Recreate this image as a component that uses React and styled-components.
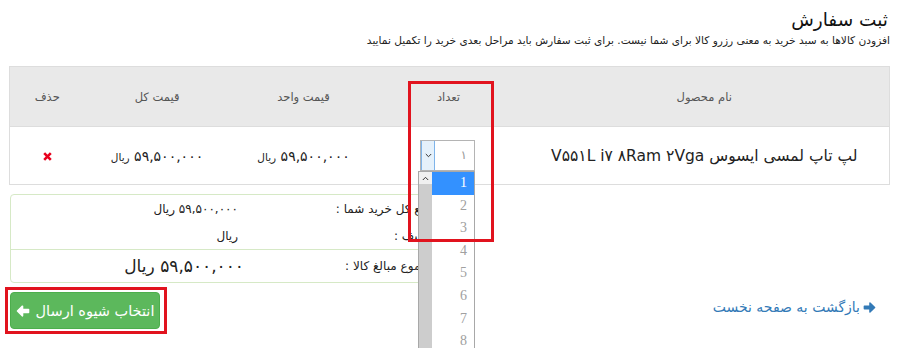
import React from 'react';
import styled, { createGlobalStyle } from 'styled-components';

const GlobalStyle = createGlobalStyle`
   html, body {
      margin: 0;
      padding: 0;
      background: #fff;
   }
   body {
      font-family: "DejaVu Sans", "Noto Sans", sans-serif;
      direction: rtl;
      color: #333;
   }
`;

const PageStyle = styled.div`
   box-sizing: border-box;
   height: 348px;
   overflow: hidden;
   padding: 8px 10px 0 10px;
`;

const TitleStyle = styled.h2`
   margin: 0;
   font-size: 18.5px;
   font-weight: 400;
   line-height: 24px;
   color: #111;
   padding-right: 2px;
`;

const SubtitleStyle = styled.p`
   margin: 0;
   font-size: 10.6px;
   line-height: 16px;
   color: #222;
`;

const TableStyle = styled.table`
   margin-top: 18px;
   width: 880px;
   border-collapse: collapse;
   table-layout: fixed;
   border: 1px solid #ddd;

   & th {
      background: #e9e9e9;
      height: 59px;
      font-size: 11.5px;
      font-weight: 400;
      color: #555;
      border-bottom: 1px solid #ddd;
      text-align: center;
      vertical-align: middle;
      padding: 0;
   }

   & td {
      height: 57px;
      text-align: center;
      vertical-align: middle;
      padding: 0;
   }
`;

const ProductName = styled.span`
   font-size: 15.5px;
   color: #222;
`;

const Price = styled.span`
   font-size: 14px;
   color: #222;

   & small {
      font-size: 10.5px;
   }
`;

const SelectWrap = styled.div`
   position: relative;
   display: inline-block;
   vertical-align: middle;
   width: 55px;
   height: 31px;
   margin-right: 2px;
`;

const SelectBox = styled.div`
   box-sizing: border-box;
   width: 100%;
   height: 100%;
   border: 1px solid #b4b4b4;
   display: flex;
   direction: ltr;
   background: #fff;
`;

const SelectArrow = styled.div`
   width: 12px;
   background: #e5f1fb;
   border-right: 1px solid #7eb4ea;
   border-left: 1px solid #7eb4ea;
   display: flex;
   align-items: center;
   justify-content: center;
`;

const SelectValue = styled.div`
   flex: 1;
   text-align: right;
   padding-right: 7px;
   font-size: 12px;
   line-height: 29px;
   color: #999;
`;

const ListStyle = styled.div`
   position: absolute;
   top: 31px;
   left: -2px;
   width: 57px;
   height: 200px;
   box-sizing: border-box;
   border: 1px solid #a8a8a8;
   border-bottom: none;
   background: #fff;
   display: flex;
   direction: ltr;
   z-index: 10;
`;

const ScrollTrack = styled.div`
   width: 13px;
   background: #cdcdcd;
   display: flex;
   flex-direction: column;
`;

const ScrollUp = styled.div`
   height: 12px;
   background: #f0f0f0;
   display: flex;
   align-items: center;
   justify-content: center;
`;

const ListItems = styled.div`
   flex: 1;
   display: flex;
   flex-direction: column;
`;

const ListItem = styled.div`
   height: 22.6px;
   flex-shrink: 0;
   line-height: 22.6px;
   text-align: right;
   padding-right: 7px;
   font-family: "Liberation Serif", serif;
   font-size: 14px;
   color: ${({ $active }) => ($active ? '#fff' : '#a0a0a0')};
   background: ${({ $active }) => ($active ? '#3391ff' : 'transparent')};
`;

const Highlight = styled.div`
   position: absolute;
   box-sizing: border-box;
   border: 3px solid #e1131e;
   pointer-events: none;
   z-index: 11;
   left: ${({ $left }) => $left}px;
   top: ${({ $top }) => $top}px;
   width: ${({ $width }) => $width}px;
   height: ${({ $height }) => $height}px;
`;

const SummaryHolder = styled.div`
   display: flex;
   justify-content: flex-end;
`;

const SummaryStyle = styled.div`
   margin-top: 9px;
   width: 438px;
   box-sizing: border-box;
   border: 1px solid #d6e9c6;
   border-radius: 4px;
   background: #fff;
`;

const SummaryRow = styled.div`
   display: grid;
   grid-template-columns: 200px 1fr;
   align-items: center;
   height: ${({ $h }) => $h}px;
   border-top: ${({ $divider }) => ($divider ? '1px solid #d6e9c6' : 'none')};
`;

const SummaryLabel = styled.div`
   font-size: 12px;
   color: #222;
   padding-right: 12px;
`;

const SummaryValue = styled.div`
   font-size: ${({ $big }) => ($big ? '17px' : '12px')};
   color: #222;
   padding-right: ${({ $big }) => ($big ? '3px' : '9px')};
`;

const FooterStyle = styled.div`
   margin-top: 4px;
   display: flex;
   justify-content: space-between;
   align-items: center;
`;

const BackLink = styled.a`
   display: flex;
   align-items: center;
   gap: 3px;
   margin-right: 14px;
   margin-top: -7px;
   color: #337ab7;
   font-size: 14px;
   text-decoration: none;
`;

const ButtonFrame = styled.div`
   border: 3px solid #e1131e;
   padding: 2px 4px 2px 2px;
   margin-left: -5px;
`;

const SubmitButton = styled.button`
   width: 150px;
   height: 37px;
   border: 1px solid #4cae4c;
   border-radius: 4px;
   background: #5cb85c;
   color: #fff;
   font-family: inherit;
   font-size: 14.5px;
   display: flex;
   align-items: center;
   justify-content: center;
   gap: 6px;
   padding: 0;
   direction: rtl;
`;

const Arrow = ({ dir = 'right', color, size = 13 }) => (
   <svg width={size} height={size} viewBox="0 0 14 14" style={{ transform: dir === 'left' ? 'scaleX(-1)' : 'none' }}>
      <path
         d="M1.5 5.6h6V2.2l5 4.8-5 4.8V8.4h-6z"
         fill={color}
         stroke={color}
         strokeWidth="1.6"
         strokeLinejoin="round"
      />
   </svg>
);

const Cross = () => (
   <svg width="9" height="9" viewBox="0 0 9 9">
      <path d="M1.2 1.2l6.6 6.6M7.8 1.2L1.2 7.8" stroke="#e8001c" strokeWidth="2.6" />
   </svg>
);

const Chevron = ({ up }) => (
   <svg width="7" height="5" viewBox="0 0 7 5">
      <path d={up ? 'M0.8 4l2.7-2.7L6.2 4' : 'M0.8 1l2.7 2.7L6.2 1'} fill="none" stroke="#333" strokeWidth="1" />
   </svg>
);

const options = [1, 2, 3, 4, 5, 6, 7, 8];

const App = () => (
   <>
      <GlobalStyle />
      <PageStyle>
         <TitleStyle>ثبت سفارش</TitleStyle>
         <SubtitleStyle>
            افزودن کالاها به سبد خرید به معنی رزرو کالا برای شما نیست. برای ثبت سفارش باید مراحل بعدی خرید را تکمیل نمایید
         </SubtitleStyle>

         <TableStyle>
            <colgroup>
               <col style={{ width: 370 }} />
               <col style={{ width: 142 }} />
               <col style={{ width: 148 }} />
               <col style={{ width: 145 }} />
               <col style={{ width: 75 }} />
            </colgroup>
            <thead>
               <tr>
                  <th>نام محصول</th>
                  <th>تعداد</th>
                  <th>قیمت واحد</th>
                  <th>قیمت کل</th>
                  <th>حذف</th>
               </tr>
            </thead>
            <tbody>
               <tr>
                  <td>
                     <ProductName>لپ تاپ لمسی ایسوس V۵۵۱L i۷ ۸Ram ۲Vga</ProductName>
                  </td>
                  <td>
                     <SelectWrap>
                        <SelectBox>
                           <SelectArrow>
                              <Chevron />
                           </SelectArrow>
                           <SelectValue>۱</SelectValue>
                        </SelectBox>
                        <ListStyle>
                           <ScrollTrack>
                              <ScrollUp>
                                 <Chevron up />
                              </ScrollUp>
                           </ScrollTrack>
                           <ListItems>
                              {options.map((n) => (
                                 <ListItem key={n} $active={n === 1}>
                                    {n}
                                 </ListItem>
                              ))}
                           </ListItems>
                        </ListStyle>
                        <Highlight $left={-12} $top={-59} $width={86} $height={161} />
                     </SelectWrap>
                  </td>
                  <td>
                     <Price>
                        ۵۹,۵۰۰,۰۰۰ <small>ریال</small>
                     </Price>
                  </td>
                  <td>
                     <Price>
                        ۵۹,۵۰۰,۰۰۰ <small>ریال</small>
                     </Price>
                  </td>
                  <td>
                     <Cross />
                  </td>
               </tr>
            </tbody>
         </TableStyle>

         <SummaryHolder>
            <SummaryStyle>
               <SummaryRow $h={27}>
                  <SummaryLabel>جمع کل خرید شما :</SummaryLabel>
                  <SummaryValue>۵۹,۵۰۰,۰۰۰ ریال</SummaryValue>
               </SummaryRow>
               <SummaryRow $h={27}>
                  <SummaryLabel>تخفیف :</SummaryLabel>
                  <SummaryValue>ریال</SummaryValue>
               </SummaryRow>
               <SummaryRow $h={32} $divider>
                  <SummaryLabel>مجموع مبالغ کالا :</SummaryLabel>
                  <SummaryValue $big>۵۹,۵۰۰,۰۰۰ ریال</SummaryValue>
               </SummaryRow>
            </SummaryStyle>
         </SummaryHolder>

         <FooterStyle>
            <BackLink href="#">
               <Arrow dir="right" color="#337ab7" size={13} />
               بازگشت به صفحه نخست
            </BackLink>
            <ButtonFrame>
               <SubmitButton>
                  انتخاب شیوه ارسال
                  <Arrow dir="left" color="#fff" size={14} />
               </SubmitButton>
            </ButtonFrame>
         </FooterStyle>
      </PageStyle>
   </>
);

export default App;
